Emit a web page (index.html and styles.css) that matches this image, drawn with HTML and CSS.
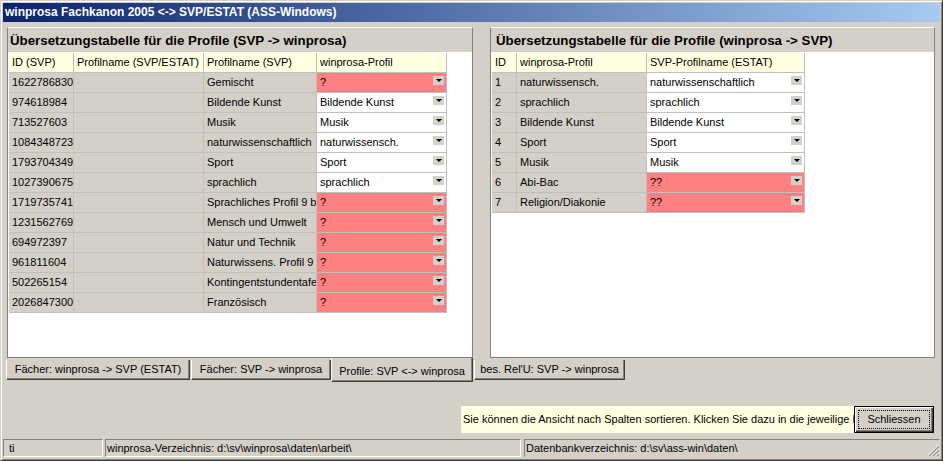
FILE: index.html
```html
<!DOCTYPE html>
<html lang="de">
<head>
<meta charset="utf-8">
<title>winprosa Fachkanon 2005</title>
<link rel="stylesheet" href="styles.css">
</head>
<body>
<div class="window">
  <div class="titlebar">winprosa Fachkanon 2005 &lt;-&gt; SVP/ESTAT (ASS-Windows)</div>
  <div class="page">
    <div class="panel panel-left">
      <div class="panel-title">Übersetzungstabelle für die Profile (SVP -&gt; winprosa)</div>
      <div class="grid-area">
        <div class="grid grid-left">
          <div class="c h">ID (SVP)</div><div class="c h">Profilname (SVP/ESTAT)</div><div class="c h">Profilname (SVP)</div><div class="c h">winprosa-Profil</div>

          <div class="c">1622786830</div><div class="c"></div><div class="c">Gemischt</div><div class="c combo r"><span>?</span><i class="arrow"></i></div>
          <div class="c">974618984</div><div class="c"></div><div class="c">Bildende Kunst</div><div class="c combo w"><span>Bildende Kunst</span><i class="arrow"></i></div>
          <div class="c">713527603</div><div class="c"></div><div class="c">Musik</div><div class="c combo w"><span>Musik</span><i class="arrow"></i></div>
          <div class="c">1084348723</div><div class="c"></div><div class="c">naturwissenschaftlich</div><div class="c combo w"><span>naturwissensch.</span><i class="arrow"></i></div>
          <div class="c">1793704349</div><div class="c"></div><div class="c">Sport</div><div class="c combo w"><span>Sport</span><i class="arrow"></i></div>
          <div class="c">1027390675</div><div class="c"></div><div class="c">sprachlich</div><div class="c combo w"><span>sprachlich</span><i class="arrow"></i></div>
          <div class="c">1719735741</div><div class="c"></div><div class="c">Sprachliches Profil 9 bis 10</div><div class="c combo r"><span>?</span><i class="arrow"></i></div>
          <div class="c">1231562769</div><div class="c"></div><div class="c">Mensch und Umwelt</div><div class="c combo r"><span>?</span><i class="arrow"></i></div>
          <div class="c">694972397</div><div class="c"></div><div class="c">Natur und Technik</div><div class="c combo r"><span>?</span><i class="arrow"></i></div>
          <div class="c">961811604</div><div class="c"></div><div class="c">Naturwissens. Profil 9</div><div class="c combo r"><span>?</span><i class="arrow"></i></div>
          <div class="c">502265154</div><div class="c"></div><div class="c">Kontingentstundentafel</div><div class="c combo r"><span>?</span><i class="arrow"></i></div>
          <div class="c">2026847300</div><div class="c"></div><div class="c">Französisch</div><div class="c combo r"><span>?</span><i class="arrow"></i></div>
        </div>
      </div>
    </div>
    <div class="splitter"></div>
    <div class="panel panel-right">
      <div class="panel-title">Übersetzungstabelle für die Profile (winprosa -&gt; SVP)</div>
      <div class="grid-area">
        <div class="grid grid-right">
          <div class="c h">ID</div><div class="c h">winprosa-Profil</div><div class="c h">SVP-Profilname (ESTAT)</div>

          <div class="c">1</div><div class="c">naturwissensch.</div><div class="c combo w"><span>naturwissenschaftlich</span><i class="arrow"></i></div>
          <div class="c">2</div><div class="c">sprachlich</div><div class="c combo w"><span>sprachlich</span><i class="arrow"></i></div>
          <div class="c">3</div><div class="c">Bildende Kunst</div><div class="c combo w"><span>Bildende Kunst</span><i class="arrow"></i></div>
          <div class="c">4</div><div class="c">Sport</div><div class="c combo w"><span>Sport</span><i class="arrow"></i></div>
          <div class="c">5</div><div class="c">Musik</div><div class="c combo w"><span>Musik</span><i class="arrow"></i></div>
          <div class="c">6</div><div class="c">Abi-Bac</div><div class="c combo r"><span>??</span><i class="arrow"></i></div>
          <div class="c">7</div><div class="c">Religion/Diakonie</div><div class="c combo r"><span>??</span><i class="arrow"></i></div>
        </div>
      </div>
    </div>
  </div>

  <div class="tabs">
    <div class="tab tab-1">Fächer: winprosa -&gt; SVP (ESTAT)</div>
    <div class="tab tab-2">Fächer: SVP -&gt; winprosa</div>
    <div class="tab tab-3 active">Profile: SVP &lt;-&gt; winprosa</div>
    <div class="tab tab-4">bes. Rel'U: SVP -&gt; winprosa</div>
  </div>

  <div class="actions">
    <div class="hint">Sie können die Ansicht nach Spalten sortieren. Klicken Sie dazu in die jeweilige Kopfzeile.</div>
    <button class="btn"><span class="focus">Schliessen</span></button>
  </div>

  <div class="status">
    <div class="sp sp-1">ti</div>
    <div class="sp sp-2">winprosa-Verzeichnis: d:\sv\winprosa\daten\arbeit\</div>
    <div class="sp sp-3"><span>Datenbankverzeichnis: d:\sv\ass-win\daten\</span>
      <svg class="grip" width="12" height="12" viewBox="0 0 12 12">
        <g stroke="#808080" stroke-width="1">
          <line x1="12" y1="1.5" x2="1.5" y2="12"/>
          <line x1="12" y1="2.5" x2="2.5" y2="12"/>
          <line x1="12" y1="5.5" x2="5.5" y2="12"/>
          <line x1="12" y1="6.5" x2="6.5" y2="12"/>
          <line x1="12" y1="9.5" x2="9.5" y2="12"/>
          <line x1="12" y1="10.5" x2="10.5" y2="12"/>
        </g>
        <g stroke="#ffffff" stroke-width="1">
          <line x1="12" y1="0.5" x2="0.5" y2="12"/>
          <line x1="12" y1="4.5" x2="4.5" y2="12"/>
          <line x1="12" y1="8.5" x2="8.5" y2="12"/>
        </g>
      </svg>
    </div>
  </div>
</div>
</body>
</html>
```
FILE: styles.css
```css
* { box-sizing: border-box; }

body {
  margin: 0;
  background: #D4D0C8;
  font-family: "Liberation Sans", Arial, sans-serif;
  font-size: 11px;
  color: #000;
}

.window {
  width: 943px;
  height: 461px;
  border: 1px solid;
  border-color: #D4D0C8 #404040 #404040 #D4D0C8;
  box-shadow: inset 1px 1px #fff, inset -1px -1px #808080;
  padding: 2px;
  display: flex;
  flex-direction: column;
  overflow: hidden;
}

.titlebar {
  height: 19px;
  flex: none;
  background: linear-gradient(to right, #0A246A, #A6CAF0);
  color: #fff;
  font-weight: bold;
  font-size: 12px;
  line-height: 19px;
  padding-left: 2px;
  white-space: nowrap;
}

.page {
  display: flex;
  margin-top: 5px;
  height: 331px;
  flex: none;
}

.panel {
  display: flex;
  flex-direction: column;
  border: 1px solid #808080;
  border-top-color: #fff;
}

.panel-left { width: 466px; margin-left: 4px; }
.splitter { width: 17px; flex: none; }
.panel-right { width: 445px; }

.panel-title {
  height: 24px;
  flex: none;
  font-size: 13.3px;
  font-weight: bold;
  line-height: 25px;
  padding-left: 2px;
  white-space: nowrap;
  overflow: hidden;
}
.panel-right .panel-title { padding-left: 5px; }

.grid-area {
  flex: 1;
  background: #fff;
  padding: 1px 0 0 1px;
}

.grid {
  display: grid;
  gap: 1px;
  grid-auto-rows: 19px;
  background: #C0C0C0;
  border-right: 1px solid #C0C0C0;
  border-bottom: 1px solid #C0C0C0;
  width: max-content;
}
.grid-left { grid-template-columns: 64px 129px 112px 129px; }
.grid-right { grid-template-columns: 24px 129px 157px; }

.c {
  background: #D4D0C8;
  padding: 0 0 0 3px;
  line-height: 19px;
  white-space: nowrap;
  overflow: hidden;
}
.h { background: #FFFFE1; }
.w { background: #fff; }
.r { background: #FF8080; }

.combo {
  display: flex;
  align-items: center;
  padding-right: 2px;
}
.combo span {
  flex: 1;
  overflow: hidden;
}
.arrow {
  flex: none;
  align-self: flex-start;
  width: 11px;
  height: 9px;
  margin-top: 3px;
  background: #D4D0C8;
  display: flex;
  align-items: center;
  justify-content: center;
}
.arrow::after {
  content: "";
  border-top: 3px solid #000;
  border-left: 3px solid transparent;
  border-right: 3px solid transparent;
}

.tabs {
  display: flex;
  align-items: flex-start;
  height: 24px;
  flex: none;
  padding-left: 3px;
}
.tab {
  height: 20px;
  margin-top: 2px;
  border-left: 1px solid #fff;
  border-right: 1px solid #404040;
  border-bottom: 1px solid #404040;
  box-shadow: inset -1px -1px #808080;
  text-align: center;
  line-height: 19px;
  white-space: nowrap;
  overflow: hidden;
}
.tab-1 { width: 184px; }
.tab-2 { width: 140px; margin-left: 1px; }
.tab-3 { width: 142px; }
.tab-4 { width: 151px; margin-left: 1px; }
.tab.active {
  height: 24px;
  margin-top: 0;
  padding-top: 4px;
  line-height: 18px;
}

.actions {
  display: flex;
  justify-content: flex-end;
  margin-top: 24px;
  height: 27px;
  flex: none;
  padding-right: 6px;
}
.hint {
  width: 393px;
  background: #FFFFE1;
  padding-left: 2px;
  line-height: 27px;
  white-space: nowrap;
  overflow: hidden;
}
.btn {
  width: 80px;
  height: 27px;
  border: 1px solid #000;
  background: #D4D0C8;
  box-shadow: inset 1px 1px #fff, inset -1px -1px #404040, inset -2px -2px #808080;
  font: inherit;
  color: #000;
  padding: 3px;
  margin: 0;
}
.focus {
  display: block;
  height: 100%;
  border: 1px dotted #000;
  line-height: 17px;
  text-align: center;
}

.status {
  display: flex;
  margin-top: 6px;
  height: 18px;
  flex: none;
}
.sp {
  border: 1px solid;
  border-color: #808080 #fff #fff #808080;
  line-height: 16px;
  padding-left: 1px;
  white-space: nowrap;
  overflow: hidden;
}
.sp-1 { width: 100px; padding-left: 5px; }
.sp-2 { width: 416px; margin-left: 2px; }
.sp-3 {
  flex: 1;
  margin-left: 3px;
  display: flex;
  border-right-color: #D4D0C8;
  border-bottom-color: #D4D0C8;
}
.sp-3 span { flex: 1; overflow: hidden; }
.grip { flex: none; align-self: flex-end; }
```
